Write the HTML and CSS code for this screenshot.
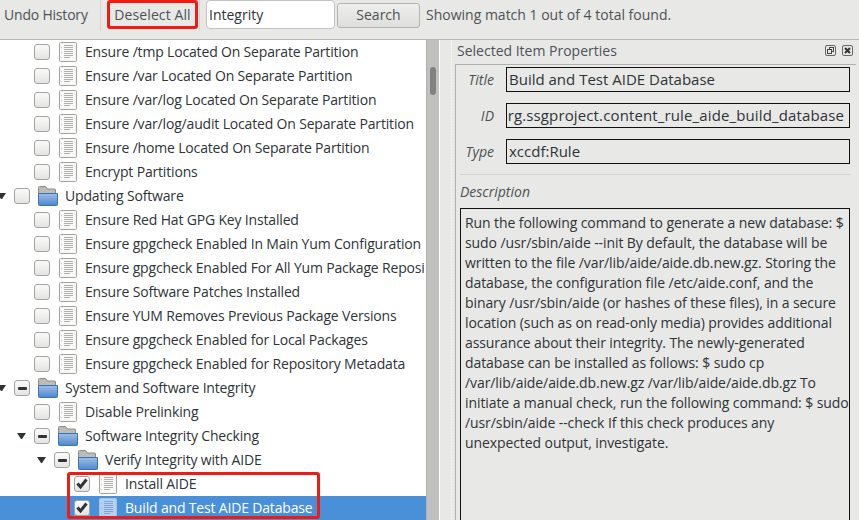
FILE: index.html
```html
<!DOCTYPE html>
<html lang="en">
<head>
<meta charset="utf-8">
<title>Undo History</title>
<link rel="stylesheet" href="styles.css">
</head>
<body>
<svg class="defs" width="0" height="0" aria-hidden="true">
  <defs>
    <linearGradient id="fblue" x1="0" y1="0" x2="0" y2="1">
      <stop offset="0" stop-color="#9dbfe8"/>
      <stop offset="1" stop-color="#4f86cb"/>
    </linearGradient>
  </defs>
  <symbol id="doc" viewBox="0 0 18 20">
    <rect x="0.5" y="0.5" width="17" height="19" rx="1" fill="#f8f8f7" stroke="#a0a2a0"/>
    <path d="M5 3.500h9M5 5.500h9M5 7.500h9M5 9.500h9M5 11.500h9M5 13.500h9M5 15.500h6" stroke="#b0b2b1" stroke-width="1" fill="none"/>
    <path d="M2.500 5v1M2.500 10v1M2.500 15v1" stroke="#c4c5c4"/>
  </symbol>
  <symbol id="docsel" viewBox="0 0 18 20">
    <rect x="0.5" y="0.5" width="17" height="19" rx="1" fill="#b7d0ee" stroke="#a5c3e8"/>
    <path d="M5 3.500h9M5 5.500h9M5 7.500h9M5 9.500h9M5 11.500h9M5 13.500h9M5 15.500h6" stroke="#7ea5da" stroke-width="1" fill="none"/>
    <path d="M2.500 5v1M2.500 10v1M2.500 15v1" stroke="#95b5e2"/>
  </symbol>
  <symbol id="folder" viewBox="0 0 20 20">
    <path d="M0.500 17V1.500a1 1 0 0 1 1-1h6l2 2.500h7a1 1 0 0 1 1 1V8H0.500z" fill="#bcbdbb" stroke="#8a8c8a"/>
    <path d="M0.500 7.500h19v11a1 1 0 0 1-1 1h-17a1 1 0 0 1-1-1z" fill="url(#fblue)" stroke="#3a72b6"/>
  </symbol>
</svg>

<header class="toolbar">
  <span class="tool-label">Undo History</span>
  <span class="sep sep-a"></span>
  <span class="deselect">Deselect All</span>
  <span class="sep sep-b"></span>
  <span class="search-input">Integrity</span>
  <span class="search-btn">Search</span>
  <span class="status">Showing match 1 out of 4 total found.</span>
</header>

<main class="main">
  <section class="tree">
    <div class="row l1"><i class="slot"></i><i class="cb"></i><svg class="ic-doc"><use href="#doc"/></svg><span>Ensure /tmp Located On Separate Partition</span></div>
    <div class="row l1"><i class="slot"></i><i class="cb"></i><svg class="ic-doc"><use href="#doc"/></svg><span>Ensure /var Located On Separate Partition</span></div>
    <div class="row l1"><i class="slot"></i><i class="cb"></i><svg class="ic-doc"><use href="#doc"/></svg><span>Ensure /var/log Located On Separate Partition</span></div>
    <div class="row l1"><i class="slot"></i><i class="cb"></i><svg class="ic-doc"><use href="#doc"/></svg><span>Ensure /var/log/audit Located On Separate Partition</span></div>
    <div class="row l1"><i class="slot"></i><i class="cb"></i><svg class="ic-doc"><use href="#doc"/></svg><span>Ensure /home Located On Separate Partition</span></div>
    <div class="row l1"><i class="slot"></i><i class="cb"></i><svg class="ic-doc"><use href="#doc"/></svg><span>Encrypt Partitions</span></div>
    <div class="row l0"><i class="slot open"></i><i class="cb"></i><svg class="ic-folder"><use href="#folder"/></svg><span>Updating Software</span></div>
    <div class="row l1"><i class="slot"></i><i class="cb"></i><svg class="ic-doc"><use href="#doc"/></svg><span>Ensure Red Hat GPG Key Installed</span></div>
    <div class="row l1"><i class="slot"></i><i class="cb"></i><svg class="ic-doc"><use href="#doc"/></svg><span>Ensure gpgcheck Enabled In Main Yum Configuration</span></div>
    <div class="row l1"><i class="slot"></i><i class="cb"></i><svg class="ic-doc"><use href="#doc"/></svg><span>Ensure gpgcheck Enabled For All Yum Package Reposi</span></div>
    <div class="row l1"><i class="slot"></i><i class="cb"></i><svg class="ic-doc"><use href="#doc"/></svg><span>Ensure Software Patches Installed</span></div>
    <div class="row l1"><i class="slot"></i><i class="cb"></i><svg class="ic-doc"><use href="#doc"/></svg><span>Ensure YUM Removes Previous Package Versions</span></div>
    <div class="row l1"><i class="slot"></i><i class="cb"></i><svg class="ic-doc"><use href="#doc"/></svg><span>Ensure gpgcheck Enabled for Local Packages</span></div>
    <div class="row l1"><i class="slot"></i><i class="cb"></i><svg class="ic-doc"><use href="#doc"/></svg><span>Ensure gpgcheck Enabled for Repository Metadata</span></div>
    <div class="row l0"><i class="slot open"></i><i class="cb mixed"></i><svg class="ic-folder"><use href="#folder"/></svg><span>System and Software Integrity</span></div>
    <div class="row l1"><i class="slot"></i><i class="cb"></i><svg class="ic-doc"><use href="#doc"/></svg><span>Disable Prelinking</span></div>
    <div class="row l1"><i class="slot open"></i><i class="cb mixed"></i><svg class="ic-folder"><use href="#folder"/></svg><span>Software Integrity Checking</span></div>
    <div class="row l2"><i class="slot open"></i><i class="cb mixed"></i><svg class="ic-folder"><use href="#folder"/></svg><span>Verify Integrity with AIDE</span></div>
    <div class="row l3"><i class="slot"></i><i class="cb checked"><svg viewBox="0 0 14 14"><path d="M2.500 6.500l3 3.500 6-7.500" fill="none" stroke="#2e3436" stroke-width="3"/></svg></i><svg class="ic-doc"><use href="#doc"/></svg><span>Install AIDE</span></div>
    <div class="row l3 selected"><i class="slot"></i><i class="cb checked"><svg viewBox="0 0 14 14"><path d="M2.500 6.500l3 3.500 6-7.500" fill="none" stroke="#2e3436" stroke-width="3"/></svg></i><svg class="ic-doc"><use href="#docsel"/></svg><span>Build and Test AIDE Database</span></div>
    <div class="annotation"></div>
  </section>
  <div class="scrollbar"><i class="thumb"></i></div>
  <div class="splitter"></div>
  <aside class="panel">
    <div class="panel-head">
      <span>Selected Item Properties</span>
      <span class="head-icons">
        <svg width="11" height="11" viewBox="0 0 11 11"><rect x="0.500" y="0.500" width="10" height="10" rx="1.500" fill="none" stroke="#666"/><rect x="4.500" y="2.500" width="4" height="4" fill="none" stroke="#444"/><rect x="2.500" y="4.500" width="4" height="4" fill="#e8e8e7" stroke="#444"/></svg>
        <svg width="11" height="11" viewBox="0 0 11 11"><rect x="0.500" y="0.500" width="10" height="10" rx="1.500" fill="none" stroke="#666"/><path d="M3 3l5 5M8 3l-5 5" stroke="#333" stroke-width="2"/></svg>
      </span>
    </div>
    <div class="panel-body">
      <div class="fields">
        <em>Title</em><div class="field">Build and Test AIDE Database</div>
        <em>ID</em><div class="field scrolled"><span>org.ssgproject.content_rule_aide_build_database</span></div>
        <em>Type</em><div class="field">xccdf:Rule</div>
      </div>
      <hr class="rule">
      <em class="desc-label">Description</em>
      <div class="desc">Run the following command to generate a new database: $<br>sudo /usr/sbin/aide --init By default, the database will be<br>written to the file /var/lib/aide/aide.db.new.gz. Storing the<br>database, the configuration file /etc/aide.conf, and the<br>binary /usr/sbin/aide (or hashes of these files), in a secure<br>location (such as on read-only media) provides additional<br>assurance about their integrity. The newly-generated<br>database can be installed as follows: $ sudo cp<br>/var/lib/aide/aide.db.new.gz /var/lib/aide/aide.db.gz To<br>initiate a manual check, run the following command: $ sudo<br>/usr/sbin/aide --check If this check produces any<br>unexpected output, investigate.</div>
    </div>
  </aside>
</main>
</body>
</html>
```

FILE: styles.css
```css
* { box-sizing: border-box; }
html, body { margin: 0; height: 100%; }
body {
  width: 859px;
  height: 520px;
  overflow: hidden;
  background: #e8e8e7;
  color: #2e3436;
  font: 14px/20px "Open Sans", sans-serif;
  display: flex;
  flex-direction: column;
}
.defs { position: absolute; }

.toolbar {
  height: 40px;
  flex: none;
  display: flex;
  align-items: flex-start;
  border-bottom: 1px solid #b6b6b3;
  color: #4d5355;
}
.tool-label { margin: 5px 12px 0 4px; width: 84px; white-space: nowrap; letter-spacing: -0.2px; }
.sep { width: 1px; height: 31px; background: #d4d4d2; flex: none; }
.sep-a { margin-right: 6px; }
.sep-b { margin: 0 6px 0 1px; }
.deselect {
  width: 91px;
  height: 29px;
  border: 3px solid #f01c14;
  border-radius: 3px;
  text-align: center;
  line-height: 23px;
  white-space: nowrap;
  letter-spacing: 0.1px;
}
.search-input {
  width: 129px;
  height: 29px;
  padding: 4px 2px;
  background: #fff;
  border: 1px solid #c3c3c1;
  border-radius: 4px;
  color: #2e3436;
}
.search-btn {
  width: 83px;
  height: 25px;
  margin: 3px 6px 0 2px;
  border: 1px solid #b4b4b1;
  border-radius: 3px;
  background: linear-gradient(#eeeeed, #dededc);
  text-align: center;
  line-height: 22px;
}
.status { margin-top: 5px; white-space: nowrap; }

.main { flex: 1; display: flex; min-height: 0; }

.tree {
  position: relative;
  width: 426px;
  flex: none;
  background: #fff;
  overflow: hidden;
}
.row {
  height: 24px;
  margin-left: -3px;
  display: flex;
  align-items: center;
  white-space: nowrap;
}
.row span { flex: none; letter-spacing: -0.17px; }
.l0 { padding-left: 0; }
.l1 { padding-left: 20px; }
.l2 { padding-left: 40px; }
.l3 { padding-left: 60px; }
.selected { background: #4a90d9; color: #fff; }

.slot { width: 9px; height: 6px; margin-right: 8px; flex: none; }
.slot.open {
  border-left: 4.500px solid transparent;
  border-right: 4.500px solid transparent;
  border-top: 6px solid #2e3436;
}
.cb {
  position: relative;
  width: 16px;
  height: 16px;
  flex: none;
  border: 1px solid #a3a4a1;
  border-radius: 3px;
  background: linear-gradient(#fafafa, #e4e4e2);
  box-shadow: 0 1px 0 rgba(255, 255, 255, 0.5);
  display: flex;
}
.cb svg { width: 14px; height: 14px; }
.cb.mixed::after {
  content: "";
  margin: auto;
  width: 9px;
  height: 3px;
  border-radius: 1px;
  background: #2e3436;
}
.ic-doc { width: 18px; height: 20px; margin: 0 8px 0 9px; flex: none; }
.ic-folder { width: 20px; height: 20px; margin: 0 7px 0 8px; flex: none; }

.annotation {
  position: absolute;
  left: 67px;
  top: 432px;
  width: 253px;
  height: 47px;
  border: 3px solid #f01c14;
  border-radius: 3px;
}

.scrollbar {
  position: relative;
  width: 14px;
  flex: none;
  background: #c0c1bf;
  border-left: 1px solid #b0b1af;
  border-right: 1px solid #fff;
}
.thumb {
  position: absolute;
  left: 3px;
  top: 27px;
  width: 6px;
  height: 28px;
  border-radius: 3px;
  background: #7f8281;
}
.splitter {
  width: 15px;
  flex: none;
  background: radial-gradient(circle at 11.500px 1px, #f8f8f8 1px, transparent 1px) 0 0 / 15px 3px;
}

.panel { flex: 1; min-width: 0; display: flex; flex-direction: column; }
.panel-head {
  height: 24px;
  flex: none;
  padding: 0 6px 3px 2px;
  display: flex;
  justify-content: space-between;
  align-items: center;
  color: #4d5355;
}
.head-icons { display: flex; gap: 6px; }
.panel-body {
  flex: 1;
  margin-right: 3px;
  padding: 2px 0 0 4px;
  border-top: 1px solid #b0b0ae;
  border-left: 1px solid #b0b0ae;
  overflow: hidden;
}
.fields {
  display: grid;
  grid-template-columns: 34px 344px;
  column-gap: 12px;
  row-gap: 11px;
  align-items: center;
}
.fields em { text-align: right; color: #4d5355; }
.field {
  height: 25px;
  border: 1px solid #111;
  padding: 0 2px;
  font-size: 15px;
  line-height: 23px;
  white-space: nowrap;
  overflow: hidden;
}
.field.scrolled { display: flex; justify-content: flex-end; padding: 0 5px 0 0; }
.field.scrolled span { flex: none; letter-spacing: 0.13px; }
.rule { width: 390px; height: 1px; margin: 10px 0 7px; border: 0; background: #d2d2d0; }
.desc-label { display: block; color: #4d5355; height: 26px; }
.desc {
  width: 390px;
  height: 320px;
  padding: 4px 4px;
  border: 1px solid #111;
  border-bottom: 0;
  white-space: nowrap;
  overflow: hidden;
  letter-spacing: -0.09px;
}
```
